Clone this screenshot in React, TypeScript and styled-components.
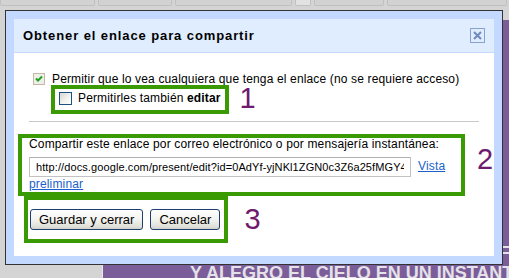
import React from 'react';
import styled, { createGlobalStyle } from 'styled-components';

const Global = createGlobalStyle`
  html, body { margin: 0; padding: 0; }
  body { background: #d4d4d4; font-family: "Liberation Sans", Arial, sans-serif; }
`;

const Page = styled.div`
  position: relative;
  width: 509px;
  height: 278px;
  overflow: hidden;
  background: #d4d4d4;
  display: flex;
  flex-direction: column;
`;

const TabStrip = styled.div`
  display: flex;
  height: 20px;
  gap: 3px;
  align-items: flex-start;
  flex: none;
`;

const Tab = styled.div<{ $w: number; $light?: boolean }>`
  width: ${p => p.$w}px;
  height: 6px;
  flex: none;
  box-sizing: border-box;
  border: 1px solid #c0c0c0;
  border-top: none;
  border-radius: 0 0 2px 2px;
  background: ${p => (p.$light ? '#e2e2e2' : '#d2d2d2')};
`;

const Workspace = styled.div`
  flex: 1;
  display: flex;
`;

const Sidebar = styled.div`
  width: 102px;
  flex: none;
  border-right: 1px solid #e8e8e8;
`;

const Slide = styled.div`
  position: relative;
  flex: 1;
  background: #7b5e99;
  padding: 244px 0 0 87px;
  box-sizing: border-box;
  overflow: hidden;
`;

const SlideText = styled.div`
  font: bold 18px/18px "Liberation Sans", Arial, sans-serif;
  color: #e4e1e8;
  white-space: nowrap;
`;

const SlideStripe = styled.div<{ $top: number }>`
  position: absolute;
  right: 0;
  top: ${p => p.$top}px;
  width: 7px;
  height: 2px;
  background: #e4e1e8;
`;

const Dialog = styled.div`
  position: absolute;
  left: 5px;
  top: 10px;
  width: 498px;
  height: 255px;
  box-sizing: border-box;
  border: 1px solid #333;
  background: #c3d9ff;
  padding: 8px;
  display: flex;
  flex-direction: column;
`;

const Panel = styled.div`
  flex: 1;
  background: #fff;
  display: flex;
  flex-direction: column;
`;

const TitleBar = styled.div`
  height: 34px;
  box-sizing: border-box;
  background: #e0edfe;
  border-bottom: 1px solid #c3d9ff;
  display: flex;
  align-items: center;
  justify-content: space-between;
  padding: 0 9px 0 9px;
`;

const Title = styled.div`
  font: bold 13px/16px "Liberation Sans", Arial, sans-serif;
  letter-spacing: 0.9px;
  color: #000;
`;

const CloseBox = styled.button`
  width: 15px;
  height: 15px;
  padding: 0;
  border: none;
  background: none;
  display: block;
  cursor: pointer;
`;

const Body = styled.div`
  flex: 1;
  display: flex;
  flex-direction: column;
  font: 12px/15px "Liberation Sans", Arial, sans-serif;
  letter-spacing: 0.15px;
  color: #000;
`;

const CheckRow = styled.div`
  display: flex;
  align-items: center;
  gap: 7px;
  height: 12px;
  line-height: 12px;
  margin: 20px 0 0 19px;
  white-space: nowrap;
`;

const Annotated = styled.div<{ $ml: number; $mt: number }>`
  display: flex;
  align-items: flex-start;
  margin: ${p => p.$mt}px 0 0 ${p => p.$ml}px;
`;

const GreenBox = styled.div`
  box-sizing: border-box;
  border: 4px solid #3a9a04;
`;

const EditBox = styled(GreenBox)`
  display: flex;
  align-items: center;
  gap: 6px;
  padding: 1px 4px 3px 4px;
  line-height: 17px;
  white-space: nowrap;
`;

const ShareBox = styled(GreenBox)`
  width: 447px;
  height: 62px;
  padding: 0 4px 0 7px;
`;

const ButtonBox = styled(GreenBox)`
  display: flex;
  gap: 7px;
  padding: 9px 4px 9px 2px;
`;

const StepNumber = styled.div<{ $ml: number; $mt: number }>`
  font: 29px/22px "Liberation Sans", Arial, sans-serif;
  color: #6e1a6e;
  margin: ${p => p.$mt}px 0 0 ${p => p.$ml}px;
`;

const Box = styled.span`
  display: block;
  flex: none;
  width: 13px;
  height: 13px;
  box-sizing: border-box;
  border: 1px solid #1c5180;
  background: linear-gradient(135deg, #d8d8d2 0%, #f4f4f0 60%, #ffffff 100%);
`;

const Separator = styled.div`
  margin: 7px 0 0 15px;
  width: 450px;
  height: 1px;
  background: #c8c8c8;
`;

const ShareLabel = styled.div`
  line-height: 13px;
  white-space: nowrap;
`;

const LinkLine = styled.div`
  margin-top: 6px;
  line-height: 15px;
`;

const UrlInput = styled.input`
  display: inline-block;
  vertical-align: middle;
  width: 382px;
  height: 20px;
  box-sizing: border-box;
  margin: 0 7px 0 0;
  padding: 0 6px;
  border: 1px solid #c2c2c2;
  border-top-color: #b0b0b0;
  font: 11px "Liberation Sans", Arial, sans-serif;
  letter-spacing: 0.1px;
  color: #000;
  background: #fff;
  outline: none;
`;

const Link = styled.a`
  color: #1a5fcc;
  text-decoration: underline;
  cursor: pointer;
`;

const Button = styled.button`
  height: 21px;
  padding: 0 8px;
  box-sizing: border-box;
  border: 1px solid #1d3e6f;
  border-radius: 3px;
  background: linear-gradient(#ffffff 0%, #f2f2ee 50%, #e2e2dc 85%, #d2d2cc 100%);
  font: 13px/19px "Liberation Sans", Arial, sans-serif;
  color: #000;
  white-space: nowrap;
  cursor: pointer;
`;

const CheckedBox = () => (
  <svg width="12" height="12" viewBox="0 0 12 12" style={{ flex: 'none', display: 'block' }}>
    <rect x="0" y="0" width="12" height="12" fill="#efefe9" />
    <rect x="0.5" y="0.5" width="11" height="11" fill="none" stroke="#9a7f5c" strokeWidth="1" strokeDasharray="1 1" />
    <path d="M3 5.5 L5 7.5 L9 3.5" fill="none" stroke="#21a121" strokeWidth="2" />
  </svg>
);

const CloseIcon = () => (
  <svg width="15" height="15" viewBox="0 0 15 15" style={{ display: 'block' }}>
    <rect x="0.5" y="0.5" width="14" height="14" fill="#e0edfe" stroke="#87a2cc" />
    <path d="M4 4 L11 11 M11 4 L4 11" stroke="#6f8bbd" strokeWidth="2" />
  </svg>
);

const url =
  'http://docs.google.com/present/edit?id=0AdYf-yjNKl1ZGN0c3Z6a25fMGY4MmZnZ3RncQ&hl=es';

export default function App() {
  return (
    <>
      <Global />
      <Page>
        <TabStrip>
          <Tab $w={95} />
          <Tab $w={74} />
          <Tab $w={117} />
          <Tab $w={16} $light />
          <Tab $w={70} />
          <Tab $w={120} />
        </TabStrip>
        <Workspace>
          <Sidebar />
          <Slide>
            <SlideText>Y ALEGRO EL CIELO EN UN INSTANTE</SlideText>
            <SlideStripe $top={226} />
            <SlideStripe $top={232} />
          </Slide>
        </Workspace>

        <Dialog>
          <Panel>
            <TitleBar>
              <Title>Obtener el enlace para compartir</Title>
              <CloseBox aria-label="Cerrar">
                <CloseIcon />
              </CloseBox>
            </TitleBar>
            <Body>
              <CheckRow>
                <CheckedBox />
                <span>Permitir que lo vea cualquiera que tenga el enlace (no se requiere acceso)</span>
              </CheckRow>

              <Annotated $ml={37} $mt={0}>
                <EditBox>
                  <Box />
                  <span>
                    Permitirles también <b>editar</b>
                  </span>
                </EditBox>
                <StepNumber $ml={11} $mt={2}>1</StepNumber>
              </Annotated>

              <Separator />

              <Annotated $ml={4} $mt={12}>
                <ShareBox>
                  <ShareLabel>
                    Compartir este enlace por correo electrónico o por mensajería instantánea:
                  </ShareLabel>
                  <LinkLine>
                    <UrlInput readOnly value={url} />
                    <Link>Vista preliminar</Link>
                  </LinkLine>
                </ShareBox>
                <StepNumber $ml={12} $mt={14}>2</StepNumber>
              </Annotated>

              <Annotated $ml={10} $mt={0}>
                <ButtonBox>
                  <Button>Guardar y cerrar</Button>
                  <Button>Cancelar</Button>
                </ButtonBox>
                <StepNumber $ml={16} $mt={12}>3</StepNumber>
              </Annotated>
            </Body>
          </Panel>
        </Dialog>
      </Page>
    </>
  );
}
